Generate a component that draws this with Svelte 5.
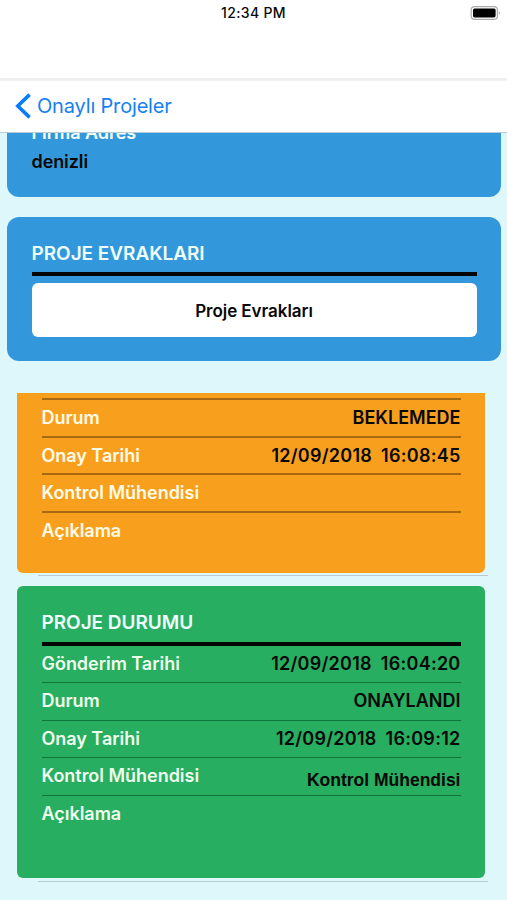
<script>
  const pending = [
    { label: 'Durum', value: 'BEKLEMEDE', kind: 'state' },
    { label: 'Onay Tarihi', date: '12/09/2018', time: '16:08:45' },
    { label: 'Kontrol Mühendisi' },
    { label: 'Açıklama' }
  ];
  const approved = [
    { label: 'Gönderim Tarihi', date: '12/09/2018', time: '16:04:20' },
    { label: 'Durum', value: 'ONAYLANDI', kind: 'state' },
    { label: 'Onay Tarihi', date: '12/09/2018', time: '16:09:12' },
    { label: 'Kontrol Mühendisi', value: 'Kontrol Mühendisi', kind: 'person' },
    { label: 'Açıklama' }
  ];
</script>

{#snippet rows(items)}
  {#each items as item}
    <div class="row">
      <span class="label">{item.label}</span>
      {#if item.date}
        <span class="value date"><span>{item.date}</span><span>{item.time}</span></span>
      {:else if item.value}
        <span class="value {item.kind}">{item.value}</span>
      {/if}
    </div>
  {/each}
{/snippet}

<div class="screen">
  <header class="status">
    <span></span>
    <span class="clock">12:34 PM</span>
    <svg class="battery" width="32" height="16" viewBox="0 0 32 16">
      <rect x="1.2" y="1.7" width="26.2" height="12.6" rx="3.4" fill="#fff" stroke="#aaa" stroke-width="1.2" />
      <rect x="3" y="3.6" width="22.6" height="8.8" rx="1.6" fill="#000" />
      <path d="M28.8 6.2c1.5.6 1.5 3 0 3.6z" fill="#aaa" />
    </svg>
  </header>
  <nav>
    <svg width="18" height="28" viewBox="0 0 18 28">
      <path d="M15.6 2.6 3.8 14l11.8 11.4" fill="none" stroke="#087cfa" stroke-width="3.6" />
    </svg>
    <span>Onaylı Projeler</span>
  </nav>
  <main>
    <section class="card address">
      <span class="label">Firma Adres</span>
      <span class="place">denizli</span>
    </section>
    <section class="card documents">
      <h2>PROJE EVRAKLARI</h2>
      <button>Proje Evrakları</button>
    </section>
    <section class="panel orange">
      {@render rows(pending)}
    </section>
    <div class="divider first"></div>
    <section class="panel green">
      <h2>PROJE DURUMU</h2>
      {@render rows(approved)}
    </section>
    <div class="divider"></div>
  </main>
</div>

<style>
  .screen {
    display: flex;
    flex-direction: column;
    width: 507px;
    height: 900px;
    overflow: hidden;
    background: #def7fb;
    font-family: Inter, "Liberation Sans", sans-serif;
    color: #080808;
  }
  .screen * { box-sizing: border-box; }
  .status {
    display: grid;
    grid-template-columns: 1fr auto 1fr;
    align-items: start;
    flex: none;
    height: 81px;
    padding-top: 5px;
    background: #fff;
    border-bottom: 3px solid #f0f0f0;
  }
  .clock {
    font-size: 14px;
    line-height: 16px;
    font-weight: 500;
    letter-spacing: .35px;
  }
  .battery { justify-self: end; margin-right: 5px; }
  nav {
    display: flex;
    align-items: center;
    flex: none;
    height: 52px;
    padding: 0 0 1px 14px;
    gap: 5px;
    background: #fff;
    border-bottom: 1px solid #b8ccd6;
    color: #1680f5;
    font-size: 20px;
    letter-spacing: -.17px;
  }
  main { flex: 1; overflow: hidden; }
  .card {
    margin: 0 6px 0 7px;
    padding: 0 24.5px;
    border-radius: 12px;
    background: #3398db;
  }
  .address {
    display: flex;
    flex-direction: column;
    height: 64px;
    border-radius: 0 0 12px 12px;
  }
  .address .label { height: 17px; margin-top: -12px; line-height: 24px; }
  .place { margin-top: 12px; font-size: 18px; line-height: 24px; font-weight: 600; letter-spacing: -.1px; }
  .documents { height: 144px; margin-top: 20px; padding-top: 22px; }
  h2 {
    height: 37px;
    margin: 0;
    border-bottom: 4px solid #050505;
    color: #effdfb;
    font-size: 19px;
    line-height: 30px;
    font-weight: 600;
    letter-spacing: -.04px;
  }
  button {
    display: block;
    width: 100%;
    height: 54px;
    margin-top: 7px;
    padding: 1px 0 0;
    border: 0;
    border-radius: 6px;
    background: #fff;
    color: #080808;
    font: 600 17px Inter, sans-serif;
    letter-spacing: -.05px;
  }
  .panel { width: 468px; margin-left: 17px; padding: 0 24.5px; }
  .orange {
    height: 180px;
    margin-top: 32px;
    padding-top: 5px;
    border-radius: 0 0 6px 6px;
    background: #f8a01e;
    --line: #a8680f;
    --text: #fffbe6;
  }
  .orange .row { border-top-width: 2px; padding-top: 1px; }
  .green {
    height: 292px;
    margin-top: 10px;
    padding-top: 22px;
    border-radius: 6px;
    background: #27ae60;
    --line: #11743a;
    --text: #effdec;
  }
  .green h2 { height: 37.5px; }
  .row {
    display: flex;
    justify-content: space-between;
    align-items: center;
    height: 37.5px;
    border-top: 1px solid var(--line);
    font-size: 18px;
    line-height: 24px;
    font-weight: 600;
  }
  h2 + .row { height: 36.5px; border-top: 0; }
  .label {
    color: var(--text, #f5ffff);
    font-size: 18px;
    font-weight: 600;
    letter-spacing: -.03px;
  }
  .date { display: flex; gap: 9px; letter-spacing: .26px; }
  .person {
    margin-top: 8px;
    font-family: "Liberation Sans", Arial, sans-serif;
    font-size: 17.5px;
    font-weight: 700;
  }
  .divider {
    width: 450px;
    height: 1px;
    margin: 3px 0 0 38px;
    background: #b5cdd2;
  }
  .divider.first { margin-top: 2px; }
</style>
